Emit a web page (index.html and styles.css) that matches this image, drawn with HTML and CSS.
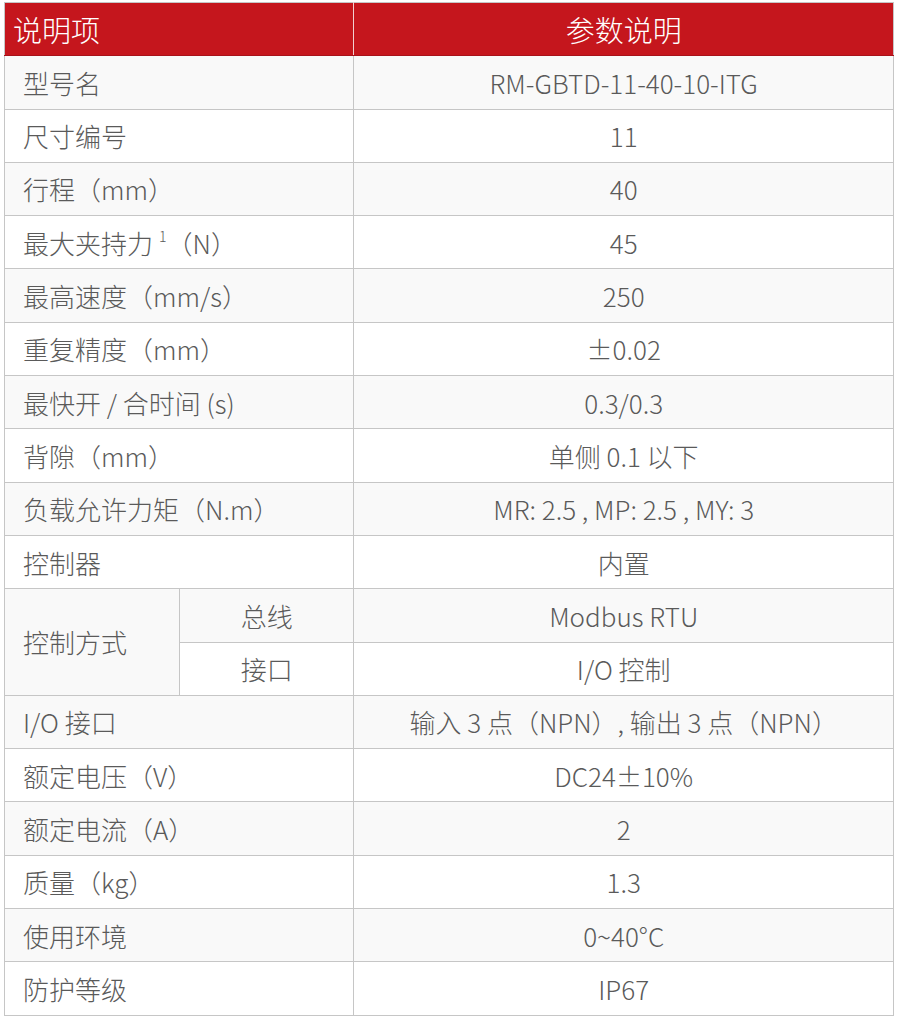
FILE: index.html
```html
<!DOCTYPE html>
<html lang="zh-CN">
<head>
<meta charset="utf-8">
<link rel="stylesheet" href="styles.css">
</head>
<body>
<table class="spec">
  <colgroup>
    <col class="c1"><col class="c2"><col class="c3">
  </colgroup>
  <thead>
    <tr class="head">
      <th colspan="2" class="hl">说明项</th>
      <th class="hr">参数说明</th>
    </tr>
  </thead>
  <tbody>
    <tr class="odd"><td colspan="2" class="k">型号名</td><td class="v">RM-GBTD-11-40-10-ITG</td></tr>
    <tr><td colspan="2" class="k">尺寸编号</td><td class="v">11</td></tr>
    <tr class="odd"><td colspan="2" class="k">行程（mm）</td><td class="v">40</td></tr>
    <tr><td colspan="2" class="k">最大夹持力<sup class="sup">1</sup>（N）</td><td class="v">45</td></tr>
    <tr class="odd"><td colspan="2" class="k">最高速度（mm/s）</td><td class="v">250</td></tr>
    <tr><td colspan="2" class="k">重复精度（mm）</td><td class="v">±0.02</td></tr>
    <tr class="odd"><td colspan="2" class="k">最快开 / 合时间 (s)</td><td class="v">0.3/0.3</td></tr>
    <tr><td colspan="2" class="k">背隙（mm）</td><td class="v">单侧 0.1 以下</td></tr>
    <tr class="odd"><td colspan="2" class="k">负载允许力矩（N.m）</td><td class="v">MR: 2.5 , MP: 2.5 , MY: 3</td></tr>
    <tr><td colspan="2" class="k">控制器</td><td class="v">内置</td></tr>
    <tr class="odd"><td rowspan="2" class="k">控制方式</td><td class="sub">总线</td><td class="v">Modbus RTU</td></tr>
    <tr><td class="sub">接口</td><td class="v">I/O 控制</td></tr>
    <tr class="odd"><td colspan="2" class="k">I/O 接口</td><td class="v">输入 3 点（NPN）, 输出 3 点（NPN）</td></tr>
    <tr><td colspan="2" class="k">额定电压（V）</td><td class="v">DC24±10%</td></tr>
    <tr class="odd"><td colspan="2" class="k">额定电流（A）</td><td class="v">2</td></tr>
    <tr><td colspan="2" class="k">质量（kg）</td><td class="v">1.3</td></tr>
    <tr class="odd"><td colspan="2" class="k">使用环境</td><td class="v">0~40°C</td></tr>
    <tr><td colspan="2" class="k">防护等级</td><td class="v">IP67</td></tr>
  </tbody>
</table>
</body>
</html>
```
FILE: styles.css
```css
html, body {
  margin: 0;
  padding: 0;
  background: #ffffff;
}
body {
  padding: 2px 0 0 4px;
  font-family: "Noto Sans CJK SC", "Noto Sans", sans-serif;
  color: #5a5a5a;
}
.spec {
  border-collapse: collapse;
  table-layout: fixed;
  width: 890px;
  border: 1px solid #c6c6c6;
}
.c1 { width: 175px; }
.c2 { width: 174px; }
.c3 { width: 539px; }
.spec tr { height: 53.3px; }
.head th {
  background: #c5161d;
  color: #ffffff;
  font-weight: 300;
  font-size: 29px;
  border-bottom: 1px solid #a8121a;
  padding: 0;
  height: 52px;
}
.hl {
  text-align: left;
  padding-left: 8px !important;
  border-right: 1px solid #f2d0d1;
}
.hr { text-align: center; }
.spec td {
  border: 1px solid #c6c6c6;
  font-size: 26px;
  font-weight: 300;
  padding: 0;
  line-height: 1.2;
}
.spec tr.odd td { background: #f9f9f9; }
.k {
  text-align: left;
  padding-left: 18px !important;
}
.sub, .v { text-align: center; }
.sup {
  font-size: 14px;
  vertical-align: 12px;
  line-height: 0;
  margin-left: 6px;
}
```
